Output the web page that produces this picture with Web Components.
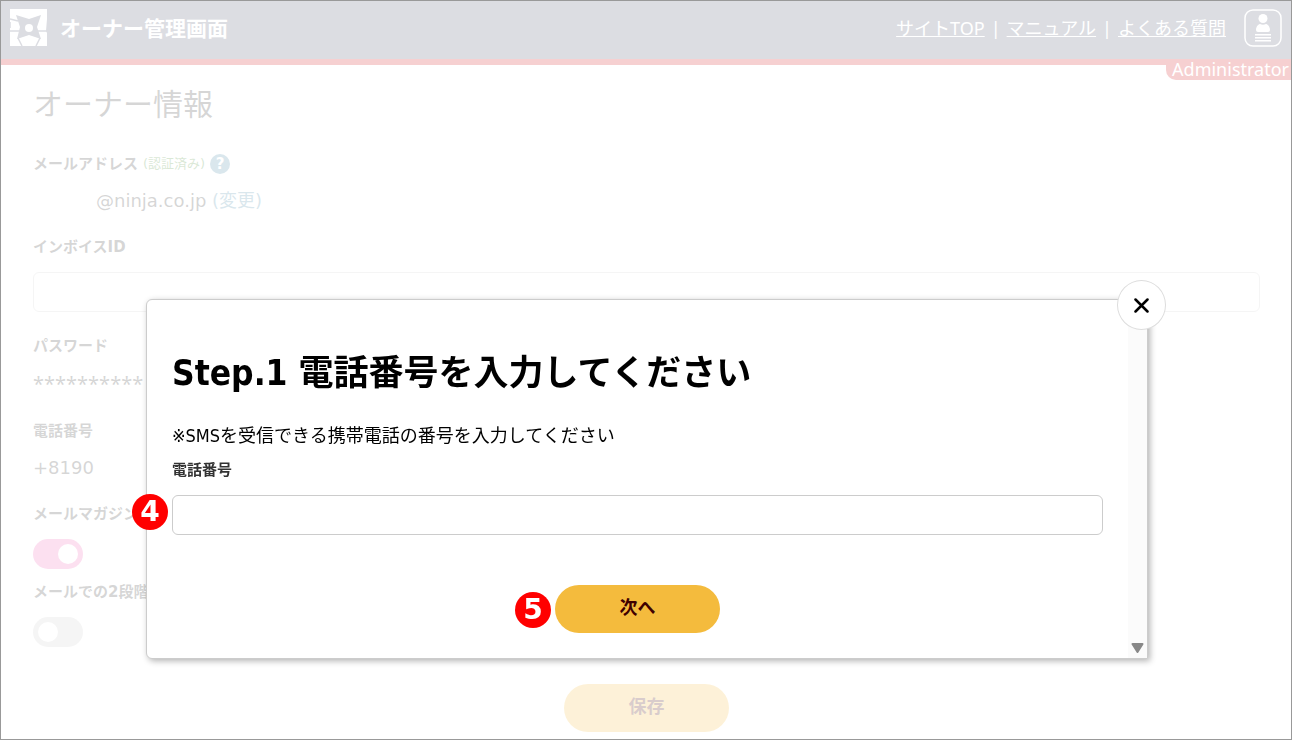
<!DOCTYPE html>
<html lang="ja">
<head>
<meta charset="utf-8">
<title>オーナー管理画面</title>
<style>
*{
	box-sizing: border-box;
}
body{
	margin: 0;
	background-color: #fff;
	color: #333;
	font-family: "DejaVu Sans Condensed", "Noto Sans CJK JP", sans-serif;
	font-size: 18px;
	line-height: 24px;
}
.page{
	display: flex;
	flex-direction: column;
	min-height: 100vh;
}
main{
	padding: 20px 32px 8px 33px;
}
h1{
	margin: 0 0 27px;
	font-size: 30px;
	font-weight: 400;
	line-height: 40px;
}
form{
	display: flex;
	flex-direction: column;
	gap: 22px;
	font-family: "DejaVu Sans", "Noto Sans CJK JP", sans-serif;
}
.switches{
	display: flex;
	flex-direction: column;
	gap: 11px;
}
a{
	color: #4687a5;
	text-decoration: none;
}
.verified{
	color: #468c32;
	font-size: 13px;
}
.masked{
	display: inline-block;
	width: 63px;
}
.stars{
	font-family: "Noto Sans", sans-serif;
	font-size: 20px;
	line-height: 26px;
}
.save{
	display: flex;
	justify-content: center;
	margin-top: 15px;
}
h2{
	margin: 0 0 27px;
	color: #000;
	font-size: 35px;
	font-weight: 700;
	line-height: 48px;
}
.note{
	margin: 0 0 10px;
	color: #000;
}
.next{
	display: flex;
	justify-content: center;
	margin-top: 50px;
}
</style>
</head>
<body>
<div class="page">
	<owner-header></owner-header>
	<main>
		<h1>オーナー情報</h1>
		<form>
			<form-row label="メールアドレス">
				<span slot="extra" class="verified">(認証済み)</span>
				<help-mark slot="extra"></help-mark>
				<span class="masked"></span>@ninja.co.jp <a href="#">(変更)</a>
			</form-row>
			<text-field label="インボイスID"></text-field>
			<form-row label="パスワード"><div class="stars">**********</div></form-row>
			<form-row label="電話番号">+8190</form-row>
			<div class="switches">
				<toggle-switch label="メールマガジン" on></toggle-switch>
				<toggle-switch label="メールでの2段階"></toggle-switch>
			</div>
			<div class="save"><pill-button>保存</pill-button></div>
		</form>
	</main>
</div>
<modal-dialog>
	<h2>Step.1 電話番号を入力してください</h2>
	<p class="note">※SMSを受信できる携帯電話の番号を入力してください</p>
	<step-mark number="4"><text-field label="電話番号"></text-field></step-mark>
	<div class="next">
		<step-mark number="5"><pill-button>次へ</pill-button></step-mark>
	</div>
</modal-dialog>
<page-frame></page-frame>

<script>
function render(el, html){
	const template = document.createElement('template');
	template.innerHTML = '<style>*{ box-sizing: border-box; }</style>' + html;
	el.attachShadow({ mode: 'open' }).appendChild(template.content.cloneNode(true));
}

class OwnerHeader extends HTMLElement {
	constructor(){
		super();
		render(this, `
<style>
:host{
	display: block;
	position: relative;
	color: #fff;
	font-family: "Noto Sans", "Noto Sans CJK JP", sans-serif;
}
header{
	display: flex;
	align-items: center;
	justify-content: space-between;
	height: 65px;
	padding: 0 10px 3px;
	background-color: #50556e;
	border-bottom: 6px solid #d21419;
}
.brand, nav{
	display: flex;
	align-items: center;
}
.brand{
	gap: 12px;
	font-size: 21px;
	font-weight: 700;
}
nav{
	gap: 6px;
}
nav a{
	color: #fff;
	text-decoration: underline;
}
.account{
	display: block;
	margin-left: 12px;
	padding: 0;
	border: 0;
	background: none;
}
svg{
	display: block;
}
/* hangs from the red line */
.role{
	position: absolute;
	top: 59px;
	right: 0;
	padding: 0 3px 1px 6px;
	border-radius: 0 0 0 10px;
	background-color: #d21419;
	line-height: 20px;
}
</style>
<header>
	<div class="brand">
		<svg width="38" height="38" viewBox="0 0 38 38" aria-hidden="true">
			<path fill="#fff" d="M0 0h37v10l-1 12 1 2v13H0z"/>
			<path fill="#50556e" d="M6 6l13 4 12-4-4 12 4 12-12-4-12 4 3-12z"/>
			<path fill="none" stroke="#50556e" stroke-width="1.5" d="M0 10l8 2M0 22h10M27 22h10M8 29l4 8M30 29l-4 8M0 13v6"/>
			<circle cx="19" cy="19" r="4" fill="#fff"/>
		</svg>
		<span>オーナー管理画面</span>
	</div>
	<nav>
		<a href="#">サイトTOP</a><span>|</span>
		<a href="#">マニュアル</a><span>|</span>
		<a href="#">よくある質問</a>
		<button type="button" class="account" aria-label="アカウント">
			<svg width="38" height="38" viewBox="0 0 38 38" fill="#fff">
				<rect x="1" y="1" width="36" height="36" rx="8" fill="none" stroke="#fff" stroke-width="1.5"/>
				<circle cx="19" cy="9.5" r="4.5"/>
				<path d="M12 21c0-4 3-6 4-6q3 1.500 6 0c1 0 4 2 4 6q0 2-2 2H14q-2 0-2-2z"/>
				<path d="M11 25h16v1.500H11zM11 28h16v1.500H11zM11 31h16v1.500H11z"/>
			</svg>
		</button>
	</nav>
</header>
<div class="role">Administrator</div>`);
	}
}

class FormRow extends HTMLElement {
	constructor(){
		super();
		render(this, `
<style>
:host{
	display: block;
}
.label{
	display: flex;
	align-items: center;
	gap: 5px;
	margin-bottom: 13px;
	font-size: 15px;
	line-height: 24px;
}
</style>
<div class="label"><b>${this.getAttribute('label')}</b><slot name="extra"></slot></div>
<slot></slot>`);
	}
}

class HelpMark extends HTMLElement {
	constructor(){
		super();
		render(this, `
<style>
:host{
	display: block;
}
button{
	display: block;
	width: 20px;
	height: 20px;
	padding: 0;
	border: 0;
	border-radius: 50%;
	background-color: #4687a5;
	color: #fff;
	font: 700 15px/20px "DejaVu Sans", sans-serif;
}
</style>
<button type="button">?</button>`);
	}
}

class TextField extends HTMLElement {
	constructor(){
		super();
		render(this, `
<style>
:host{
	display: block;
}
label{
	display: block;
	margin-bottom: 13px;
	font-size: 15px;
	font-weight: 700;
	line-height: 24px;
}
input{
	display: block;
	width: 100%;
	height: 40px;
	padding: 0 12px;
	border: 1px solid #ccc;
	border-radius: 6px;
	background-color: #fff;
	font: inherit;
}
</style>
<label for="field">${this.getAttribute('label')}</label>
<input id="field" type="text">`);
	}
}

class ToggleSwitch extends HTMLElement {
	constructor(){
		super();
		render(this, `
<style>
:host{
	display: block;
}
label{
	display: block;
	margin-bottom: 13px;
	font-size: 15px;
	font-weight: 700;
	line-height: 24px;
}
input{
	appearance: none;
	display: flex;
	width: 50px;
	height: 30px;
	margin: 0;
	padding: 5px;
	border-radius: 15px;
	background-color: #ccc;
}
input::before{
	content: "";
	width: 20px;
	height: 20px;
	border-radius: 50%;
	background-color: #fff;
}
input:checked{
	justify-content: flex-end;
	background-color: #f064b4;
}
</style>
<label for="switch">${this.getAttribute('label')}</label>
<input id="switch" type="checkbox"${this.hasAttribute('on') ? ' checked' : ''}>`);
	}
}

class PillButton extends HTMLElement {
	constructor(){
		super();
		render(this, `
<style>
:host{
	display: block;
}
button{
	display: block;
	width: 165px;
	height: 48px;
	padding: 0 0 2px;
	border: 0;
	border-radius: 24px;
	background-color: #f4bb3d;
	color: #400000;
	font: inherit;
	font-weight: 700;
}
</style>
<button type="button"><slot></slot></button>`);
	}
}

class StepMark extends HTMLElement {
	constructor(){
		super();
		render(this, `
<style>
:host{
	display: block;
	position: relative;
}
/* numbered badge, left of the control it belongs to */
.mark{
	position: absolute;
	right: 100%;
	bottom: 5px;
	width: 36px;
	height: 36px;
	margin-right: 4px;
	border-radius: 50%;
	background-color: #f00;
	color: #fff;
	font: 700 28px/36px "DejaVu Sans", sans-serif;
	text-align: center;
}
</style>
<slot></slot>
<span class="mark">${this.getAttribute('number')}</span>`);
	}
}

class ModalDialog extends HTMLElement {
	constructor(){
		super();
		render(this, `
<style>
:host{
	position: fixed;
	inset: 0;
	padding: 299px 144px 0 146px;
	background-color: rgba(255, 255, 255, 0.8);
}
.dialog{
	position: relative;
	display: flex;
	border: 1px solid #ccc;
	border-radius: 6px 6px 0 6px;
	background-color: #fff;
	box-shadow: 2px 2px 6px rgba(0, 0, 0, 0.3);
}
.body{
	flex: 1;
	padding: 49px 25px 25px;
}
.scroll{
	display: flex;
	flex-direction: column;
	justify-content: flex-end;
	align-items: center;
	width: 19px;
	padding-bottom: 5px;
	background-color: #fbfbfb;
}
.close{
	position: absolute;
	top: -20px;
	right: -19px;
	display: flex;
	align-items: center;
	justify-content: center;
	width: 49px;
	height: 50px;
	padding: 0;
	border: 1px solid #ddd;
	border-radius: 50%;
	background-color: #fff;
}
</style>
<div class="dialog" role="dialog" aria-modal="true">
	<div class="body"><slot></slot></div>
	<div class="scroll">
		<svg width="13" height="10" viewBox="0 0 13 10"><path d="M1.500 1h10L6.500 9z" fill="#888" stroke="#888" stroke-width="2" stroke-linejoin="round"/></svg>
	</div>
	<button type="button" class="close" aria-label="閉じる">
		<svg width="15" height="15" viewBox="0 0 15 15"><path d="M1.500 1.500l12 12M13.500 1.500l-12 12" stroke="#000" stroke-width="2.500" stroke-linecap="round"/></svg>
	</button>
</div>`);
		this.shadowRoot.querySelector('.close').onclick = () =>{
			this.style.display = 'none'
		}
	}
}

class PageFrame extends HTMLElement {
	constructor(){
		super();
		render(this, `
<style>
:host{
	position: fixed;
	inset: 0;
	border: 1px solid #999;
	pointer-events: none;
}
</style>`);
	}
}

customElements.define('owner-header', OwnerHeader);
customElements.define('form-row', FormRow);
customElements.define('help-mark', HelpMark);
customElements.define('text-field', TextField);
customElements.define('toggle-switch', ToggleSwitch);
customElements.define('pill-button', PillButton);
customElements.define('step-mark', StepMark);
customElements.define('modal-dialog', ModalDialog);
customElements.define('page-frame', PageFrame);
</script>
</body>
</html>
